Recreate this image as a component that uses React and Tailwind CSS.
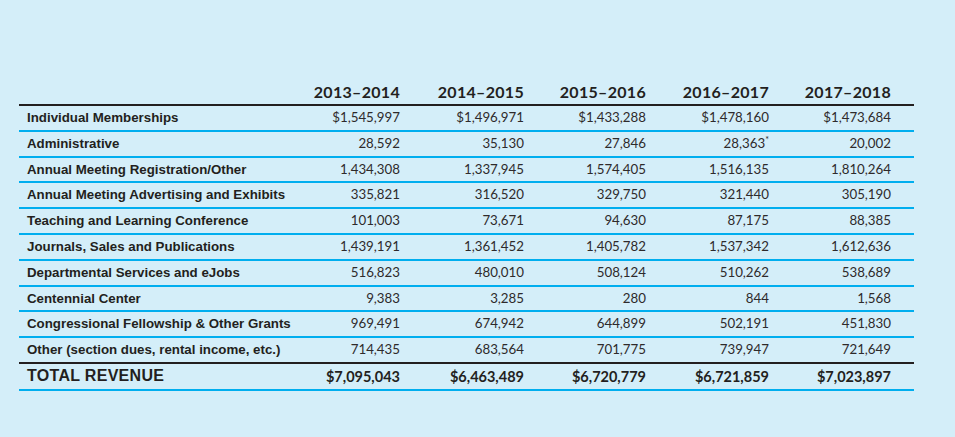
import React from "react";

const years = ["2013–2014", "2014–2015", "2015–2016", "2016–2017", "2017–2018"];

const rows = [
  ["Individual Memberships", ["$1,545,997", "$1,496,971", "$1,433,288", "$1,478,160", "$1,473,684"]],
  ["Administrative", ["28,592", "35,130", "27,846", "28,363*", "20,002"]],
  ["Annual Meeting Registration/Other", ["1,434,308", "1,337,945", "1,574,405", "1,516,135", "1,810,264"]],
  ["Annual Meeting Advertising and Exhibits", ["335,821", "316,520", "329,750", "321,440", "305,190"]],
  ["Teaching and Learning Conference", ["101,003", "73,671", "94,630", "87,175", "88,385"]],
  ["Journals, Sales and Publications", ["1,439,191", "1,361,452", "1,405,782", "1,537,342", "1,612,636"]],
  ["Departmental Services and eJobs", ["516,823", "480,010", "508,124", "510,262", "538,689"]],
  ["Centennial Center", ["9,383", "3,285", "280", "844", "1,568"]],
  ["Congressional Fellowship & Other Grants", ["969,491", "674,942", "644,899", "502,191", "451,830"]],
  ["Other (section dues, rental income, etc.)", ["714,435", "683,564", "701,775", "739,947", "721,649"]],
];

const totals = ["$7,095,043", "$6,463,489", "$6,720,779", "$6,721,859", "$7,023,897"];

function Value({ v }) {
  if (v.endsWith("*")) {
    return (
      <span>
        {v.slice(0, -1)}
        <span className="relative -top-[5px] text-[9px]">*</span>
      </span>
    );
  }
  return <span>{v}</span>;
}

export default function App() {
  return (
    <div className="w-[955px] h-[437px] bg-[#d4eef9] pt-[70px] pl-[19px] text-[#231f20]">
      <table className="w-[895px] border-collapse table-fixed">
        <colgroup>
          <col className="w-[258px]" />
          <col className="w-[123px]" />
          <col className="w-[124px]" />
          <col className="w-[122px]" />
          <col className="w-[123px]" />
          <col className="w-[145px]" />
        </colgroup>
        <thead>
          <tr className="h-[33px] border-b-2 border-[#231f20]">
            <th />
            {years.map((y, i) => (
              <th
                key={y}
                className={`text-right align-top pt-[10px] font-bold text-[16px] tracking-[0.3px] font-['Lato',sans-serif] ${i === 4 ? "pr-[23px]" : ""}`}
              >
                {y}
              </th>
            ))}
          </tr>
        </thead>
        <tbody>
          {rows.map(([label, vals], r) => (
            <tr
              key={label}
              className={`h-[25.8px] border-b-2 ${r === rows.length - 1 ? "border-[#231f20]" : "border-[#00aeef]"}`}
            >
              <td className="pl-[8px] font-bold text-[13.3px] font-['Liberation_Sans',sans-serif] whitespace-nowrap">
                {label}
              </td>
              {vals.map((v, i) => (
                <td
                  key={i}
                  className={`text-right text-[13.3px] font-normal font-['Lato',sans-serif] text-[#2e2a2b] ${i === 4 ? "pr-[23px]" : ""}`}
                >
                  <Value v={v} />
                </td>
              ))}
            </tr>
          ))}
          <tr className="h-[27px] border-b-2 border-[#00aeef]">
            <td className="pl-[8px] font-bold text-[16px] tracking-[0.3px] font-['Liberation_Sans',sans-serif]">
              TOTAL REVENUE
            </td>
            {totals.map((v, i) => (
              <td
                key={i}
                className={`text-right font-bold text-[14.5px] font-['Lato',sans-serif] ${i === 4 ? "pr-[23px]" : ""}`}
              >
                {v}
              </td>
            ))}
          </tr>
        </tbody>
      </table>
    </div>
  );
}
